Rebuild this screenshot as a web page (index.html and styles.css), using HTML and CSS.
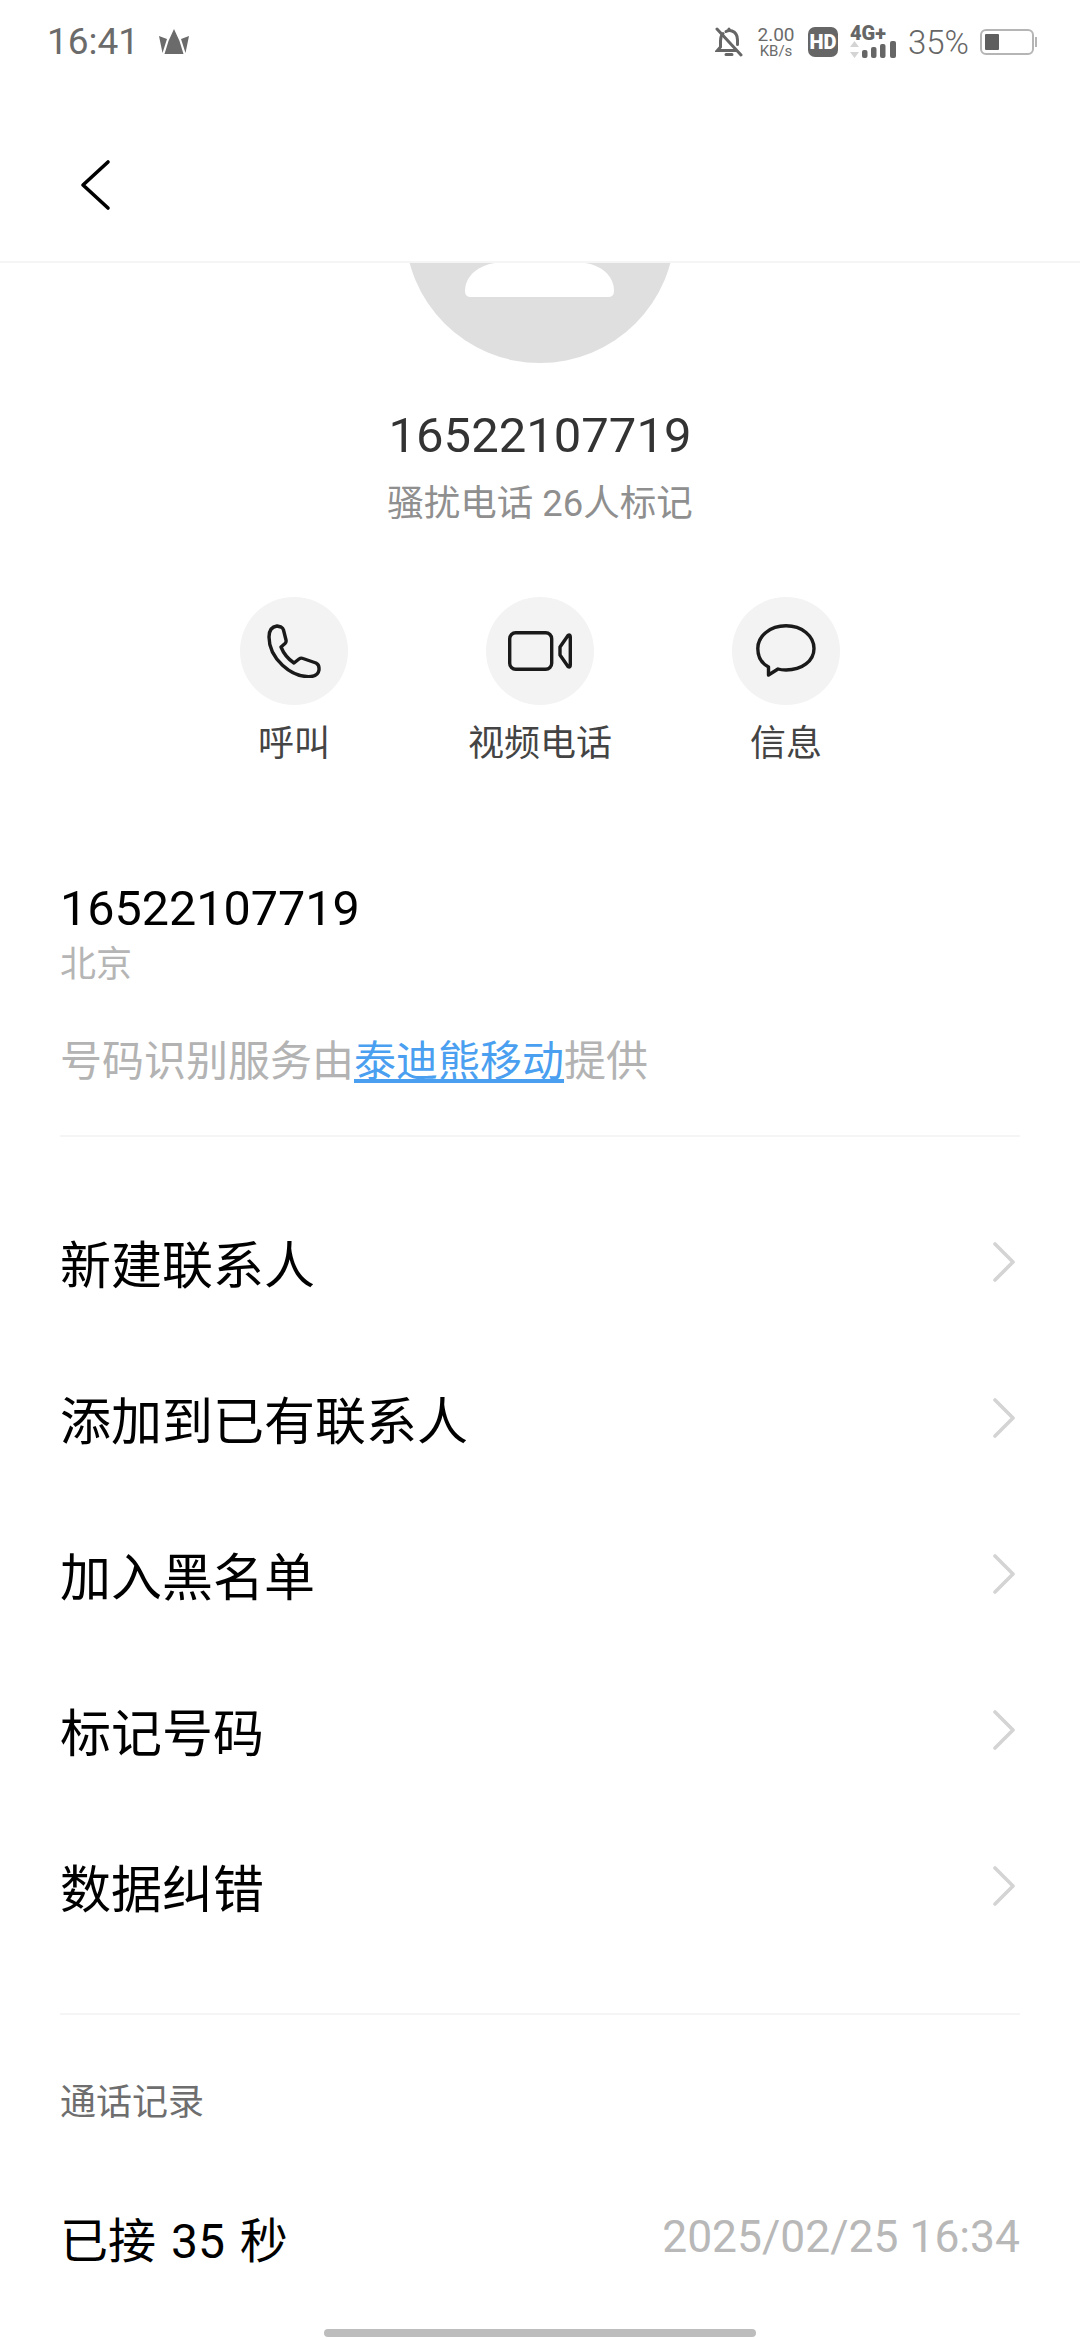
FILE: index.html
```html
<!DOCTYPE html>
<html lang="zh-CN">
<head>
  <meta charset="UTF-8" />
  <meta name="viewport" content="width=device-width, initial-scale=1.0"/>
  <title>16522107719</title>
  <link rel="stylesheet" href="styles.css">
</head>
<body>
  <div class="status-bar">
    <div class="status-left">
      <span class="status-time">16:41</span>
      <svg class="crown" width="30" height="25" viewBox="0 0 30 25"><path d="M15 0L20.500 12L24.500 25H5.500L9.500 12ZM0 7L8 10L3.500 24ZM30 7L22 10L26.500 24Z" fill="#6b6b6b"/></svg>
    </div>
    <div class="status-right">
      <svg class="bell" width="28" height="30" viewBox="0 0 28 30" fill="none" stroke="#666" stroke-width="3" stroke-linecap="round"><path d="M8 6.500C6 8.500 5.500 11 5.500 14V20L2.500 23.500H21"/><path d="M11 4.500Q14 3 17 4C20.500 5.300 22.500 8.500 22.500 13V17.500"/><path d="M14 2V3.500M11 27.500H17"/><path d="M2 2L26 28"/></svg>
      <div class="net-speed"><span>2.00</span><span>KB/s</span></div>
      <span class="hd-badge">HD</span>
      <div class="net-type">
        <span class="net-label">4G+</span>
        <svg width="47" height="18" viewBox="0 0 47 18"><path d="M4.500 0L9 6H0ZM0 11H9L4.500 17Z" fill="#d4d4d4"/><g fill="#666"><rect x="12" y="9" width="5.500" height="8" rx="2"/><rect x="21" y="6" width="5.500" height="11" rx="2"/><rect x="30" y="3" width="5.500" height="14" rx="2"/><rect x="40" y="0" width="6" height="17" rx="2"/></g></svg>
      </div>
      <span class="battery-pct">35%</span>
      <div class="battery"><div class="battery-fill"></div></div>
    </div>
  </div>

  <div class="top-bar">
    <svg width="32" height="52" viewBox="0 0 32 52" fill="none" stroke="#000" stroke-width="3.600" stroke-linecap="round" stroke-linejoin="round"><path d="M28 3L3 26L28 49"/></svg>
  </div>

  <svg class="avatar" width="270" height="101" viewBox="0 0 270 101"><circle cx="135" cy="-35" r="135" fill="#dfdfdf"/><path d="M90 0H180C195 2 209 12 209 28Q209 34 203 34H66Q60 34 60 28C60 12 75 2 90 0Z" fill="#fff"/></svg>

  <div class="caller">
    <div class="caller-number">16522107719</div>
    <div class="caller-tag">骚扰电话 26人标记</div>
  </div>

  <div class="actions">
    <div class="action">
      <div class="action-icon">
        <svg width="54" height="54" viewBox="0 0 54 54" fill="none" stroke="#1a1a1a" stroke-width="3.400" stroke-linejoin="round"><path d="M10 2L14 3Q16 4 16.500 6L19 16Q19.500 18 18 19.500L14 23Q18 33 27 39L32 35Q34 33.500 36 34.500L49 39Q52 40.500 52 44V46Q51 52 44 52.500C24 54 2 34 2 13Q2 3 10 2Z"/></svg>
      </div>
      <span class="action-label">呼叫</span>
    </div>
    <div class="action">
      <div class="action-icon">
        <svg width="64" height="40" viewBox="0 0 64 40" fill="none" stroke="#1a1a1a" stroke-width="3.400" stroke-linejoin="round"><rect x="1.700" y="1.700" width="42" height="36.600" rx="6"/><path d="M52 16L60 4.500Q62.300 3 62.300 6V34Q62.300 37 60 35.500L52 24Z"/></svg>
      </div>
      <span class="action-label">视频电话</span>
    </div>
    <div class="action">
      <div class="action-icon">
        <svg width="60" height="54" viewBox="0 0 60 54" fill="none" stroke="#1a1a1a" stroke-width="3.400" stroke-linejoin="round"><path d="M12.500 51L12.500 43C5 39 1.800 32 1.800 24.500C1.800 12 14 1.800 30 1.800C46 1.800 58 12 58 24.500C58 37 46 46 30 46C27 46 24.500 45.800 22 45Z"/></svg>
      </div>
      <span class="action-label">信息</span>
    </div>
  </div>

  <div class="number-info">
    <div class="info-number">16522107719</div>
    <div class="info-place">北京</div>
    <div class="info-source">号码识别服务由<a class="info-link">泰迪熊移动</a>提供</div>
  </div>

  <ul class="menu">
    <li class="menu-row">新建联系人<svg class="chevron" width="24" height="40" viewBox="0 0 24 40" fill="none" stroke="#d4d4d4" stroke-width="3.600" stroke-linecap="round" stroke-linejoin="round"><path d="M3 2L21 20L3 38"/></svg></li>
    <li class="menu-row">添加到已有联系人<svg class="chevron" width="24" height="40" viewBox="0 0 24 40" fill="none" stroke="#d4d4d4" stroke-width="3.600" stroke-linecap="round" stroke-linejoin="round"><path d="M3 2L21 20L3 38"/></svg></li>
    <li class="menu-row">加入黑名单<svg class="chevron" width="24" height="40" viewBox="0 0 24 40" fill="none" stroke="#d4d4d4" stroke-width="3.600" stroke-linecap="round" stroke-linejoin="round"><path d="M3 2L21 20L3 38"/></svg></li>
    <li class="menu-row">标记号码<svg class="chevron" width="24" height="40" viewBox="0 0 24 40" fill="none" stroke="#d4d4d4" stroke-width="3.600" stroke-linecap="round" stroke-linejoin="round"><path d="M3 2L21 20L3 38"/></svg></li>
    <li class="menu-row">数据纠错<svg class="chevron" width="24" height="40" viewBox="0 0 24 40" fill="none" stroke="#d4d4d4" stroke-width="3.600" stroke-linecap="round" stroke-linejoin="round"><path d="M3 2L21 20L3 38"/></svg></li>
  </ul>

  <div class="call-log">
    <div class="log-title">通话记录</div>
    <div class="log-row">
      <span class="log-duration">已接 35 秒</span>
      <span class="log-date">2025/02/25 16:34</span>
    </div>
  </div>

  <div class="home-bar"></div>
</body>
</html>
```

FILE: styles.css
```css
* {
  box-sizing: border-box;
}

html, body {
  height: 2340px;
  overflow: hidden;
}

body {
  margin: 0;
  position: relative;
  background-color: #fff;
  color: #000;
  font-family: Roboto, "Noto Sans CJK SC", sans-serif;
}

/* status bar */
.status-bar {
  height: 84px;
  display: flex;
  justify-content: space-between;
  align-items: center;
  padding: 0 46px 0 47px;
}

.status-left,
.status-right {
  display: flex;
  align-items: center;
}

.status-time {
  font-size: 37px;
  line-height: 44px;
  color: #6b6b6b;
}

.crown {
  margin-left: 20px;
  margin-top: -2px;
}

.net-speed {
  display: flex;
  flex-direction: column;
  align-items: center;
  margin-left: 14px;
  width: 38px;
  color: #6b6b6b;
}

.net-speed span:first-child {
  font-size: 19px;
  line-height: 18px;
}

.net-speed span:last-child {
  font-size: 15px;
  line-height: 14px;
}

.hd-badge {
  width: 30px;
  height: 30px;
  margin-left: 13px;
  border-radius: 7px;
  background: #666;
  color: #fff;
  font-size: 20px;
  font-weight: 900;
  line-height: 30px;
  text-align: center;
}

.net-type {
  display: flex;
  flex-direction: column;
  margin-left: 12px;
  width: 47px;
}

.net-label {
  font-size: 20px;
  font-weight: 900;
  line-height: 14px;
  color: #666;
}

.net-type svg {
  display: block;
  margin-top: 1px;
}

.battery-pct {
  margin-left: 11px;
  font-size: 33px;
  font-weight: 300;
  color: #666;
}

.battery {
  width: 54px;
  height: 26px;
  margin-left: 11px;
  padding: 3px;
  position: relative;
  border: 2px solid #b5b5b5;
  border-radius: 6px;
}

.battery::after {
  content: "";
  position: absolute;
  right: -5px;
  top: 6px;
  width: 2px;
  height: 10px;
  background: #b5b5b5;
}

.battery-fill {
  width: 14px;
  height: 100%;
  background: #5f5f5f;
  border-radius: 1px;
}

/* top bar */
.top-bar {
  height: 179px;
  display: flex;
  align-items: center;
  padding: 25px 0 0 80px;
  border-bottom: 2px solid #f5f5f5;
}

.avatar {
  display: block;
  margin: 0 auto;
}

/* caller */
.caller {
  margin-top: 44px;
  text-align: center;
}

.caller-number {
  font-size: 49px;
  line-height: 56px;
  color: #333;
}

.caller-tag {
  margin-top: 15px;
  font-size: 36.500px;
  line-height: 50px;
  color: #8f8f8f;
}

/* actions */
.actions {
  display: flex;
  justify-content: center;
  margin-top: 68px;
}

.action {
  width: 246px;
  display: flex;
  flex-direction: column;
  align-items: center;
}

.action-icon {
  width: 108px;
  height: 108px;
  display: flex;
  align-items: center;
  justify-content: center;
  border-radius: 50%;
  background: #f3f3f3;
}

.action-label {
  margin-top: 14px;
  font-size: 36px;
  line-height: 50px;
  color: #444;
}

/* number info */
.number-info {
  margin: 112px 60px 0;
  padding-bottom: 43px;
  border-bottom: 2px solid #f5f5f5;
}

.info-number {
  font-size: 48.500px;
  line-height: 56px;
}

.info-place {
  margin-top: 3px;
  font-size: 36px;
  line-height: 50px;
  color: #b5b5b5;
}

.info-source {
  margin-top: 42px;
  font-size: 42px;
  line-height: 60px;
  color: #b3b3b3;
}

.info-link {
  color: #4a9ff0;
  text-decoration: underline;
}

/* menu */
.menu {
  list-style: none;
  margin: 47px 60px 0;
  padding: 0;
  border-bottom: 2px solid #f5f5f5;
  padding-bottom: 49px;
}

.menu-row {
  height: 156px;
  display: flex;
  justify-content: space-between;
  align-items: center;
  font-size: 51px;
}

.chevron {
  margin-right: 4px;
}

/* call log */
.log-title {
  margin: 63px 60px 0;
  font-size: 36px;
  line-height: 50px;
  color: #6e6e6e;
}

.log-row {
  display: flex;
  justify-content: space-between;
  align-items: center;
  margin: 79px 60px 0;
  height: 60px;
}

.log-duration {
  font-size: 48px;
  word-spacing: 3px;
}

.log-date {
  font-size: 44.400px;
  color: #b8b8b8;
}

.home-bar {
  position: absolute;
  left: 324px;
  bottom: 3px;
  width: 432px;
  height: 8px;
  border-radius: 4px;
  background: #bdbdbd;
}
```
